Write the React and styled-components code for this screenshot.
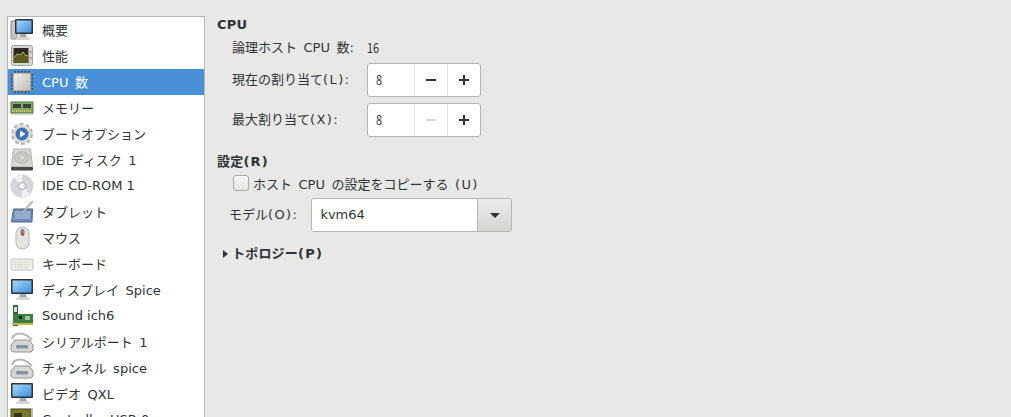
import React from "react";
import styled, { createGlobalStyle } from "styled-components";

const GlobalStyle = createGlobalStyle`
  html, body {
    margin: 0;
    height: 100%;
    background: #e8e8e7;
    overflow: hidden;
  }
  #root { height: 100%; }
`;

const FONT = `"DejaVu Sans", "Noto Sans CJK JP", sans-serif`;

const Page = styled.div`
  display: flex;
  height: 417px;
  padding: 16px 0 0 7px;
  box-sizing: border-box;
  font-family: ${FONT};
  font-size: 13px;
  color: #2e3436;
  background: #e8e8e7;
  overflow: hidden;
`;

const Sidebar = styled.ul`
  flex: none;
  width: 196px;
  height: 500px;
  margin: 0;
  padding: 0;
  list-style: none;
  background: #fff;
  border: 1px solid #b6b6b3;
`;

const Row = styled.li`
  display: flex;
  align-items: center;
  height: 26px;
  padding-left: 2px;
  gap: 8px;
  white-space: pre;
  color: ${(p) => (p.$active ? "#fff" : "#2e3436")};
  background: ${(p) => (p.$active ? "#4a90d9" : "transparent")};
`;

const RowText = styled.span`
  padding-bottom: 2px;
`;

const IconBox = styled.svg`
  flex: none;
  width: 24px;
  height: 24px;
`;

const Main = styled.main`
  display: flex;
  flex-direction: column;
  align-items: flex-start;
  padding: 1px 0 0 12px;
`;

const Heading = styled.div`
  font-weight: bold;
  line-height: 15px;
  letter-spacing: 0.2px;
`;

const CpuGrid = styled.div`
  display: grid;
  grid-template-columns: 135px auto;
  row-gap: 6px;
  align-items: center;
  margin: 8px 0 0 15px;
`;

const Label = styled.span`
  white-space: pre;
  line-height: 15px;
  padding-bottom: 2px;
`;

// the (L): part of a label is set wider than the plain font gives
const Mnemonic = styled.span`
  letter-spacing: ${(p) => (p.$bold ? "1.2px" : "1.4px")};
`;

const Digits = styled.span`
  display: inline-block;
  font-family: "Noto Sans CJK JP", sans-serif;
  font-size: 14px;
  line-height: 15px;
  padding-bottom: 2px;
  transform: scaleX(0.78);
  transform-origin: left center;
`;

const Spin = styled.div`
  display: flex;
  width: 112px;
  height: 32px;
  background: #fff;
  border: 1px solid #b6b6b3;
  border-radius: 3px;
`;

const SpinEntry = styled.span`
  flex: 1;
  display: flex;
  align-items: center;
  padding-left: 8px;
`;

const SpinButton = styled.span`
  display: flex;
  align-items: center;
  justify-content: center;
  width: 32px;
  border-left: 1px solid #e3e3e1;
  color: ${(p) => (p.$disabled ? "#d4d4d2" : "#2e3436")};
`;

const Settings = styled(Heading)`
  margin-top: 17px;
`;

const CheckRow = styled.label`
  display: flex;
  align-items: center;
  gap: 4px;
  height: 16px;
  margin: 6px 0 0 16px;
  white-space: pre;
`;

const CheckBox = styled.span`
  width: 14px;
  height: 14px;
  border: 1px solid #a9a9a6;
  border-radius: 3px;
  background: linear-gradient(#f7f7f6, #e4e4e2);
`;

const ModelRow = styled.div`
  display: flex;
  align-items: center;
  gap: 13px;
  margin: 7px 0 0 12px;
`;

const Combo = styled.div`
  display: flex;
  width: 199px;
  height: 32px;
  border: 1px solid #b6b6b3;
  border-radius: 3px;
  overflow: hidden;
`;

const ComboEntry = styled.span`
  flex: 1;
  padding-left: 8px;
  line-height: 32px;
  background: #fff;
`;

const ComboButton = styled.span`
  display: flex;
  align-items: center;
  justify-content: center;
  width: 33px;
  border-left: 1px solid #b6b6b3;
  background: linear-gradient(#ececeb, #d5d5d2);
`;

const Arrow = styled.span`
  width: 0;
  height: 0;
  border-left: 5px solid transparent;
  border-right: 5px solid transparent;
  border-top: 5px solid #2e3436;
`;

const Expander = styled(Heading)`
  display: flex;
  align-items: center;
  gap: 4px;
  margin: 14px 0 0 6px;
  white-space: pre;
`;

const RightArrow = styled.span`
  width: 0;
  height: 0;
  border-top: 4px solid transparent;
  border-bottom: 4px solid transparent;
  border-left: 5px solid #2e3436;
`;

const Monitor = ({ thermo }) => (
  <IconBox viewBox="0 0 24 24">
    <defs>
      <linearGradient id="screen" x1="0" y1="0" x2="1" y2="1">
        <stop offset="0" stopColor="#a6d8fa" />
        <stop offset="1" stopColor="#3f8fdc" />
      </linearGradient>
    </defs>
    {thermo && <rect x="1" y="3" width="6" height="18" rx="1" fill="#c9c9c4" stroke="#8b8b86" />}
    <rect x={thermo ? 5 : 1} y="1" width={thermo ? 18 : 22} height="15" rx="1" fill="#2f3337" />
    <rect x={thermo ? 6.5 : 2.5} y="2.5" width={thermo ? 15 : 19} height="12" fill="url(#screen)" />
    <path d="M10 16h6l1 3.500H9z" fill="#a5a8a6" />
    <rect x="6" y="19.500" width="14" height="2.500" rx="1" fill="#d5d6d3" />
  </IconBox>
);

const Perf = () => (
  <IconBox viewBox="0 0 24 24">
    <rect x="1.500" y="1.500" width="21" height="20" rx="2" fill="#d7d7d0" stroke="#a3a39b" />
    <rect x="3.500" y="4" width="15" height="15" fill="#2c2a22" />
    <path d="M4 14l3-4 3 1 3-3 3 4 2-1v8H4z" fill="#5f5a24" />
    <path d="M4 14l3-4 3 1 3-3 3 4 2-1" fill="none" stroke="#bdb45c" />
    <circle cx="20.500" cy="8" r="1" fill="#8f8f88" />
    <circle cx="20.500" cy="14" r="1" fill="#8f8f88" />
  </IconBox>
);

const Chip = () => (
  <IconBox viewBox="0 0 24 24">
    <defs>
      <linearGradient id="die" x1="0" y1="0" x2="1" y2="1">
        <stop offset="0" stopColor="#efefeb" />
        <stop offset="1" stopColor="#bdbdb8" />
      </linearGradient>
    </defs>
    <path
      d="M5 1v22M8.500 1v22M12 1v22M15.500 1v22M19 1v22M1 5h22M1 8.500h22M1 12h22M1 15.500h22M1 19h22"
      stroke="#3f3f3a"
      strokeWidth="1.600"
    />
    <rect x="2.500" y="2.500" width="19" height="19" rx="1" fill="#85857f" />
    <rect x="3.500" y="3.500" width="17" height="17" fill="url(#die)" />
  </IconBox>
);

const Memory = () => (
  <IconBox viewBox="0 0 24 24">
    <rect x="1" y="6" width="22" height="11" fill="#86a86a" stroke="#55763f" />
    <rect x="3" y="8" width="8" height="4" fill="#3d4236" />
    <rect x="13" y="8" width="8" height="4" fill="#3d4236" />
    <path d="M2 15h20" stroke="#d8c65a" strokeWidth="2" strokeDasharray="1 1" />
    <rect x="1" y="18" width="22" height="1" fill="#d8d8d4" />
  </IconBox>
);

const Boot = () => (
  <IconBox viewBox="0 0 24 24">
    <circle cx="12" cy="12" r="9.500" fill="none" stroke="#b5b6b2" strokeWidth="3" strokeDasharray="4 2" />
    <circle cx="12" cy="12" r="9" fill="#dcdcd8" />
    <circle cx="12" cy="12" r="6.500" fill="#3f70b5" />
    <path d="M10 8.500l5.500 3.500-5.500 3.500z" fill="#fff" />
  </IconBox>
);

const Disk = () => (
  <IconBox viewBox="0 0 24 24">
    <path d="M3.500 1h17l2 18h-21z" fill="#d9d9d5" stroke="#b0b0ab" />
    <ellipse cx="12" cy="9.500" rx="7.500" ry="6" fill="#c8c8c3" stroke="#babab5" />
    <circle cx="12" cy="9.500" r="1.500" fill="#e8e8e5" />
    <rect x="1" y="19" width="22" height="3.500" rx="1" fill="#4a4a44" />
  </IconBox>
);

const Cd = () => (
  <IconBox viewBox="0 0 24 24">
    <circle cx="12" cy="12" r="11.500" fill="#d6d6da" />
    <path d="M12 12L4 4a11 11 0 0 1 8-3zM12 12l8 8a11 11 0 0 1-8 3z" fill="#f0f0f3" />
    <circle cx="12" cy="12" r="3.500" fill="#fff" stroke="#a5a5ab" />
  </IconBox>
);

const Tablet = () => (
  <IconBox viewBox="0 0 24 24">
    <path d="M3.500 9h19l-.5 13H1.500z" fill="#6f8fbb" stroke="#4c648c" />
    <path d="M5 11h15v8H4.500z" fill="#93aed1" />
    <path d="M22 1L12 12l-2 3 3-2L23 2z" fill="#d0d0cc" stroke="#8a8a86" strokeWidth=".6" />
  </IconBox>
);

const Mouse = () => (
  <IconBox viewBox="0 0 24 24">
    <rect x="6" y="1" width="13" height="22" rx="6.500" fill="#e4e4e1" stroke="#b5b5b1" />
    <rect x="10.500" y="3" width="4" height="7" rx="2" fill="#85857f" />
    <rect x="11.500" y="7" width="2" height="2" fill="#c33" />
  </IconBox>
);

const Keyboard = () => (
  <IconBox viewBox="0 0 24 24">
    <rect x="1" y="7" width="22" height="11" rx="1" fill="#efefec" stroke="#c2c2bd" />
    <path d="M3 10h18M3 12.500h18M5 15h14" stroke="#d2d2cd" strokeWidth="1.400" strokeDasharray="1 .8" />
  </IconBox>
);

const Sound = () => (
  <IconBox viewBox="0 0 24 24">
    <rect x="3" y="1" width="5" height="21" fill="#2f6b3b" />
    <rect x="3" y="10" width="20" height="9" fill="#37803f" />
    <rect x="2" y="19" width="21" height="2" fill="#c9b24c" />
    <rect x="4" y="3" width="3" height="5" fill="#ddd" />
    <rect x="9" y="12" width="3" height="3" fill="#222" />
    <rect x="15" y="12" width="5" height="4" fill="#9fc29f" />
  </IconBox>
);

const Serial = () => (
  <IconBox viewBox="0 0 24 24">
    <path d="M2 9C4 2 14 1 22 10" fill="none" stroke="#b5b5b1" strokeWidth="2" />
    <path d="M5 10h14l4 5v5l-2 2H3l-2-2v-5z" fill="#d6d6d2" stroke="#92928e" />
    <rect x="6" y="15" width="12" height="3.500" rx="1" fill="#8292aa" />
  </IconBox>
);

const Controller = () => (
  <IconBox viewBox="0 0 24 24">
    <rect x="1" y="1" width="20" height="18" fill="#77782b" stroke="#45461a" />
    <rect x="21" y="0" width="2" height="22" fill="#b9b9b4" />
    <rect x="4" y="5" width="8" height="8" fill="#34351a" />
  </IconBox>
);

const EN = "\u2002";

const DEVICES = [
  [<Monitor thermo />, "概要"],
  [<Perf />, "性能"],
  [<Chip />, `CPU${EN}数`],
  [<Memory />, "メモリー"],
  [<Boot />, "ブートオプション"],
  [<Disk />, `IDE${EN}ディスク${EN}1`],
  [<Cd />, "IDE CD-ROM 1"],
  [<Tablet />, "タブレット"],
  [<Mouse />, "マウス"],
  [<Keyboard />, "キーボード"],
  [<Monitor />, `ディスプレイ${EN}Spice`],
  [<Sound />, "Sound ich6"],
  [<Serial />, `シリアルポート${EN}1`],
  [<Serial />, `チャンネル${EN}spice`],
  [<Monitor />, `ビデオ${EN}QXL`],
  [<Controller />, "Controller USB 0"],
];

const Glyph = ({ plus }) => (
  <svg width="12" height="12" viewBox="0 0 12 12">
    <path d={plus ? "M1 6h10M6 1v10" : "M1 6h10"} stroke="currentColor" strokeWidth="2" />
  </svg>
);

const Spinner = ({ value, minusDisabled }) => (
  <Spin>
    <SpinEntry>
      <Digits>{value}</Digits>
    </SpinEntry>
    <SpinButton $disabled={minusDisabled}>
      <Glyph />
    </SpinButton>
    <SpinButton>
      <Glyph plus />
    </SpinButton>
  </Spin>
);

export default function App() {
  return (
    <Page>
      <GlobalStyle />
      <Sidebar>
        {DEVICES.map(([icon, name], i) => (
          <Row key={name} $active={i === 2}>
            {icon}
            <RowText>{name}</RowText>
          </Row>
        ))}
      </Sidebar>
      <Main>
        <Heading>CPU</Heading>
        <CpuGrid>
          <Label>{`論理ホスト${EN}CPU${EN}数:`}</Label>
          <Digits>16</Digits>
          <Label>
            現在の割り当て<Mnemonic>(L):</Mnemonic>
          </Label>
          <Spinner value="8" />
          <Label>
            最大割り当て<Mnemonic>(X):</Mnemonic>
          </Label>
          <Spinner value="8" minusDisabled />
        </CpuGrid>
        <Settings>
          設定<Mnemonic $bold>(R)</Mnemonic>
        </Settings>
        <CheckRow>
          <CheckBox />
          <span>
            {`ホスト${EN}CPU${EN}の設定をコピーする${EN}`}
            <Mnemonic>(U)</Mnemonic>
          </span>
        </CheckRow>
        <ModelRow>
          <Label>
            モデル<Mnemonic>(O):</Mnemonic>
          </Label>
          <Combo>
            <ComboEntry>kvm64</ComboEntry>
            <ComboButton>
              <Arrow />
            </ComboButton>
          </Combo>
        </ModelRow>
        <Expander>
          <RightArrow />
          <span>
            トポロジー<Mnemonic $bold>(P)</Mnemonic>
          </span>
        </Expander>
      </Main>
    </Page>
  );
}
